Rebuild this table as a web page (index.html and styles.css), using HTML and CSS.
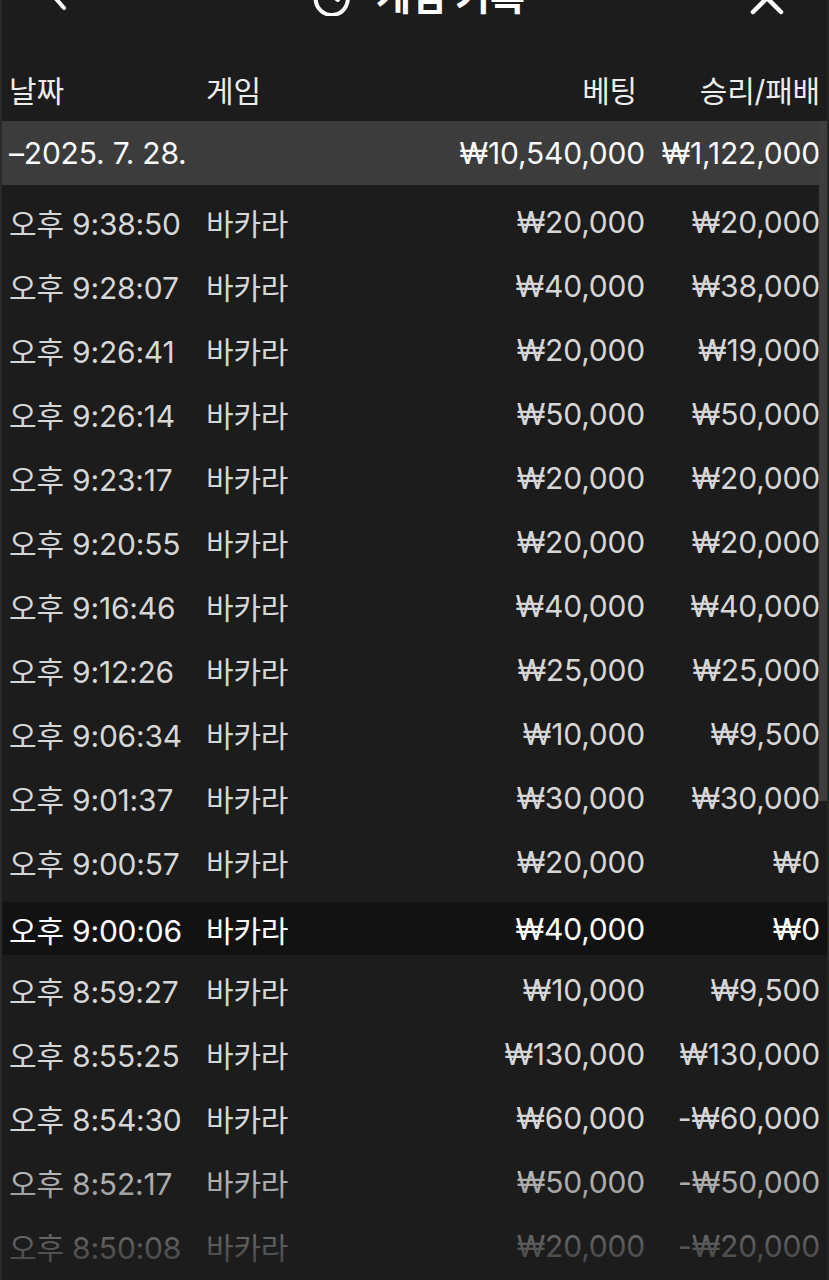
FILE: index.html
```html
<!DOCTYPE html>
<html lang="ko">
<head>
<meta charset="utf-8">
<title>게임 기록</title>
<link rel="stylesheet" href="styles.css">
</head>
<body>
<div class="screen">
  <header class="titlebar">
    <svg class="back" width="24" height="40" viewBox="0 0 24 40"><path d="M20 4 L6 20 L20 36" fill="none" stroke="#fff" stroke-width="4" stroke-linecap="round" stroke-linejoin="round"/></svg>
    <div class="title">
      <svg class="clock" width="40" height="40" viewBox="0 0 40 40"><path d="M8 12 A16 16 0 1 1 4 20" fill="none" stroke="#fff" stroke-width="4" stroke-linecap="round"/><path d="M20 11 V20 L26 24" fill="none" stroke="#fff" stroke-width="4" stroke-linecap="round"/></svg>
      <span>게임 기록</span>
    </div>
    <svg class="close" width="36" height="36" viewBox="0 0 36 36"><path d="M4 4 L32 32 M32 4 L4 32" fill="none" stroke="#fff" stroke-width="4.5" stroke-linecap="round"/></svg>
  </header>

  <div class="table">
    <div class="row head">
      <span>날짜</span><span>게임</span><span class="r bet-h">베팅</span><span class="r">승리/패배</span>
    </div>
    <div class="row summary">
      <span>–2025. 7. 28.</span><span></span><span class="r">₩10,540,000</span><span class="r">₩1,122,000</span>
    </div>
    <div class="rows">
      <div class="row"><span>오후 9:38:50</span><span>바카라</span><span class="r">₩20,000</span><span class="r">₩20,000</span></div>
      <div class="row"><span>오후 9:28:07</span><span>바카라</span><span class="r">₩40,000</span><span class="r">₩38,000</span></div>
      <div class="row"><span>오후 9:26:41</span><span>바카라</span><span class="r">₩20,000</span><span class="r">₩19,000</span></div>
      <div class="row"><span>오후 9:26:14</span><span>바카라</span><span class="r">₩50,000</span><span class="r">₩50,000</span></div>
      <div class="row"><span>오후 9:23:17</span><span>바카라</span><span class="r">₩20,000</span><span class="r">₩20,000</span></div>
      <div class="row"><span>오후 9:20:55</span><span>바카라</span><span class="r">₩20,000</span><span class="r">₩20,000</span></div>
      <div class="row"><span>오후 9:16:46</span><span>바카라</span><span class="r">₩40,000</span><span class="r">₩40,000</span></div>
      <div class="row"><span>오후 9:12:26</span><span>바카라</span><span class="r">₩25,000</span><span class="r">₩25,000</span></div>
      <div class="row"><span>오후 9:06:34</span><span>바카라</span><span class="r">₩10,000</span><span class="r">₩9,500</span></div>
      <div class="row"><span>오후 9:01:37</span><span>바카라</span><span class="r">₩30,000</span><span class="r">₩30,000</span></div>
      <div class="row"><span>오후 9:00:57</span><span>바카라</span><span class="r">₩20,000</span><span class="r">₩0</span></div>
      <div class="row active"><span>오후 9:00:06</span><span>바카라</span><span class="r">₩40,000</span><span class="r">₩0</span></div>
      <div class="row"><span>오후 8:59:27</span><span>바카라</span><span class="r">₩10,000</span><span class="r">₩9,500</span></div>
      <div class="row"><span>오후 8:55:25</span><span>바카라</span><span class="r">₩130,000</span><span class="r">₩130,000</span></div>
      <div class="row"><span>오후 8:54:30</span><span>바카라</span><span class="r">₩60,000</span><span class="r">-₩60,000</span></div>
      <div class="row"><span>오후 8:52:17</span><span>바카라</span><span class="r">₩50,000</span><span class="r">-₩50,000</span></div>
      <div class="row"><span>오후 8:50:08</span><span>바카라</span><span class="r">₩20,000</span><span class="r">-₩20,000</span></div>
    </div>
    <div class="scrollbar"></div>
  </div>
  <div class="fade"></div>
</div>
</body>
</html>
```
FILE: styles.css
```css
html, body {
  margin: 0;
  padding: 0;
  background: #1c1c1c;
}
body {
  font-family: "Inter", "Noto Sans CJK KR", sans-serif;
  color: #d6d6d6;
  width: 829px;
  height: 1280px;
  overflow: hidden;
}
.screen {
  position: relative;
  height: 1280px;
  box-sizing: border-box;
  border-left: 2px solid #2a2a2a;
  border-right: 2px solid #262626;
  overflow: hidden;
}
.titlebar {
  height: 88px;
  margin-top: -32px;
  display: flex;
  align-items: flex-end;
  justify-content: space-between;
  padding: 0 42px 0 42px;
  box-sizing: border-box;
}
.back {
  margin-bottom: 44px;
}
.close {
  margin-bottom: 40px;
}
.title {
  display: flex;
  align-items: center;
  gap: 24px;
  color: #fff;
  font-size: 38px;
  font-weight: 700;
  margin-left: 20px;
  line-height: 44px;
  margin-bottom: 38px;
}
.table {
  position: relative;
}
.row {
  display: grid;
  grid-template-columns: 197px 150px 1fr 175px;
  align-items: center;
  height: 64px;
  padding: 0 7px 0 7px;
  font-size: 30px;
  letter-spacing: -0.2px;
  white-space: nowrap;
}
.row .r { text-align: right; }
.head {
  color: #ececec;
  height: 65px;
}
.head .bet-h { padding-right: 8px; }
.summary {
  background: #3c3c3c;
  color: #fafafa;
}
.rows {
  padding-top: 5px;
}
.active {
  background: #121212;
  color: #fff;
  height: 53px;
  margin: 8px 0 3px;
}
.scrollbar {
  position: absolute;
  right: 0;
  top: 65px;
  width: 8px;
  height: 680px;
  background: #3e3e3e;
}
.fade {
  position: absolute;
  left: 0;
  right: 0;
  bottom: 0;
  height: 140px;
  background: linear-gradient(to bottom, rgba(28,28,28,0) 0%, rgba(28,28,28,0.25) 35%, rgba(28,28,28,0.7) 78%, rgba(28,28,28,0.85) 100%);
  pointer-events: none;
}
```
